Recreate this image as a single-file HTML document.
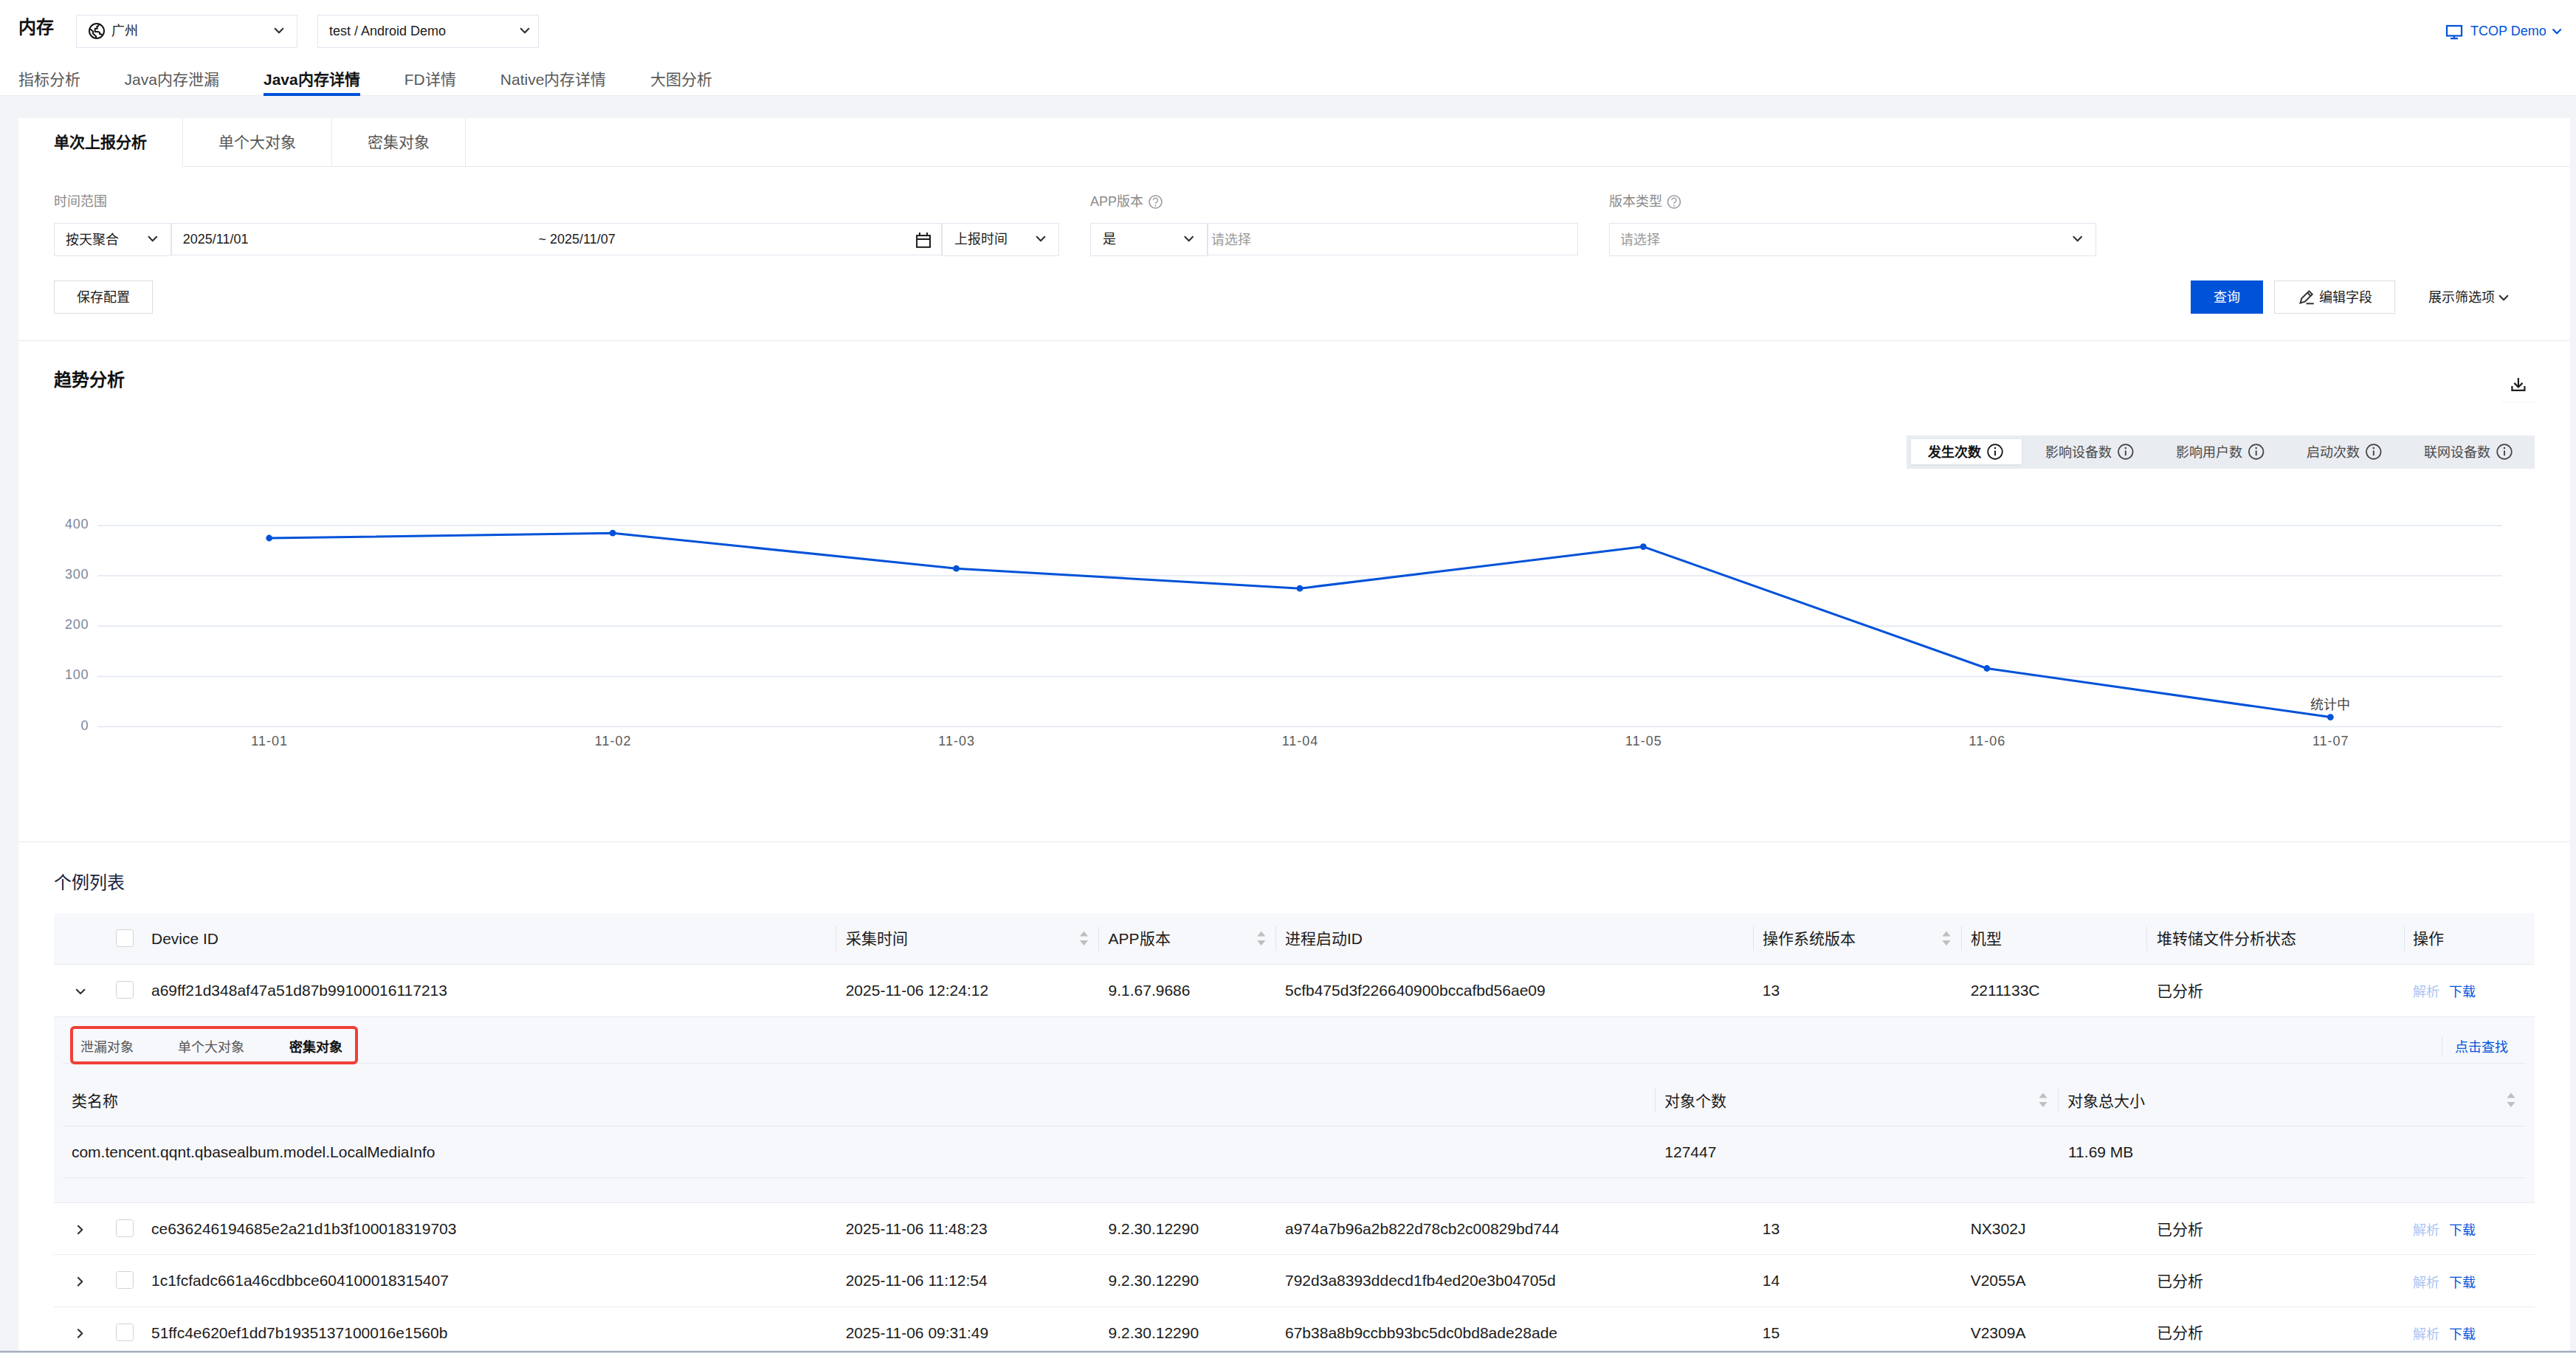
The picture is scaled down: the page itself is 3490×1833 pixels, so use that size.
<!DOCTYPE html>
<html lang="zh-CN"><head><meta charset="utf-8"><title>内存 - Java内存详情</title>
<style>
html,body{margin:0;padding:0}
body{width:3490px;height:1833px;overflow:hidden;position:relative;background:#f3f4f7;font-family:"Liberation Sans",sans-serif;}
body>div{position:absolute;}
.t{white-space:nowrap;}
svg{position:absolute;left:0;top:0;}
</style></head><body>
<div style="left:0px;top:0px;width:3490px;height:129px;background:#fff;border-bottom:1px solid #e9ebf0;"></div>
<div class="t" style="top:19px;height:36px;line-height:36px;font-size:24px;color:#111;font-weight:700;left:25px;">内存</div>
<div style="left:103px;top:20px;width:300px;height:45px;border:1px solid #e2e5ee;background:#fff;box-sizing:border-box;"></div>
<div class="t" style="top:28.5px;height:27px;line-height:27px;font-size:18px;color:#1b1b1b;left:151px;">广州</div>
<div style="left:430px;top:20px;width:300px;height:45px;border:1px solid #e2e5ee;background:#fff;box-sizing:border-box;"></div>
<div class="t" style="top:28.5px;height:27px;line-height:27px;font-size:18px;color:#1b1b1b;left:446px;">test / Android Demo</div>
<div class="t" style="top:28.5px;height:27px;line-height:27px;font-size:18px;color:#0052d9;left:3347px;">TCOP Demo</div>
<div class="t" style="top:91.6px;height:32px;line-height:32px;font-size:21px;color:#585858;left:25px;">指标分析</div>
<div class="t" style="top:91.6px;height:32px;line-height:32px;font-size:21px;color:#585858;left:168.6px;">Java内存泄漏</div>
<div class="t" style="top:91.6px;height:32px;line-height:32px;font-size:21px;color:#151515;font-weight:700;left:357px;">Java内存详情</div>
<div class="t" style="top:91.6px;height:32px;line-height:32px;font-size:21px;color:#585858;left:547.8px;">FD详情</div>
<div class="t" style="top:91.6px;height:32px;line-height:32px;font-size:21px;color:#585858;left:677.8px;">Native内存详情</div>
<div class="t" style="top:91.6px;height:32px;line-height:32px;font-size:21px;color:#585858;left:880.9px;">大图分析</div>
<div style="left:357px;top:126px;width:131px;height:3.5px;background:#0052d9;"></div>
<div style="left:25px;top:160px;width:3457px;height:1673px;background:#fff;"></div>
<div style="left:247px;top:225px;width:3235px;height:1px;background:#e7e9f0;"></div>
<div style="left:247px;top:160px;width:1px;height:65px;background:#e7e9f0;"></div>
<div style="left:449px;top:160px;width:1px;height:65px;background:#e7e9f0;"></div>
<div style="left:630px;top:160px;width:1px;height:65px;background:#e7e9f0;"></div>
<div class="t" style="top:176.5px;height:32px;line-height:32px;font-size:21px;color:#111;font-weight:700;left:-164px;width:600px;text-align:center;">单次上报分析</div>
<div class="t" style="top:176.5px;height:32px;line-height:32px;font-size:21px;color:#555;left:48.4px;width:600px;text-align:center;">单个大对象</div>
<div class="t" style="top:176.5px;height:32px;line-height:32px;font-size:21px;color:#555;left:240px;width:600px;text-align:center;">密集对象</div>
<div class="t" style="top:260.2px;height:27px;line-height:27px;font-size:18px;color:#8a8a8a;left:73px;">时间范围</div>
<div class="t" style="top:260px;height:27px;line-height:27px;font-size:18px;color:#8a8a8a;left:1477px;">APP版本</div>
<div class="t" style="top:260.2px;height:27px;line-height:27px;font-size:18px;color:#8a8a8a;left:2179.5px;">版本类型</div>
<div style="left:73px;top:302px;width:159px;height:44.5px;border:1px solid #e2e5ee;background:#fff;box-sizing:border-box;"></div>
<div class="t" style="top:311.5px;height:27px;line-height:27px;font-size:18px;color:#1b1b1b;left:88.5px;">按天聚合</div>
<div style="left:232px;top:302px;width:1044px;height:43.5px;border:1px solid #e2e5ee;background:#fff;box-sizing:border-box;"></div>
<div class="t" style="top:311px;height:27px;line-height:27px;font-size:18px;color:#1b1b1b;left:247.8px;">2025/11/01</div>
<div class="t" style="top:311px;height:27px;line-height:27px;font-size:18px;color:#1b1b1b;left:729.5px;">~ 2025/11/07</div>
<div style="left:1276px;top:302px;width:159px;height:44.5px;border:1px solid #e2e5ee;background:#fff;box-sizing:border-box;"></div>
<div class="t" style="top:311px;height:27px;line-height:27px;font-size:18px;color:#1b1b1b;left:1293px;">上报时间</div>
<div style="left:1477px;top:302px;width:159px;height:44.5px;border:1px solid #e2e5ee;background:#fff;box-sizing:border-box;"></div>
<div class="t" style="top:311px;height:27px;line-height:27px;font-size:18px;color:#1b1b1b;left:1493.7px;">是</div>
<div style="left:1636px;top:302px;width:502px;height:43.5px;border:1px solid #e2e5ee;background:#fff;box-sizing:border-box;"></div>
<div class="t" style="top:311.5px;height:27px;line-height:27px;font-size:18px;color:#9a9a9a;left:1641px;">请选择</div>
<div style="left:2179.5px;top:302px;width:660.5px;height:44.5px;border:1px solid #e2e5ee;background:#fff;box-sizing:border-box;"></div>
<div class="t" style="top:311.5px;height:27px;line-height:27px;font-size:18px;color:#9a9a9a;left:2195px;">请选择</div>
<div style="left:73px;top:380px;width:133.5px;height:44.5px;border:1px solid #dcdcdc;box-sizing:border-box;background:#fff;"></div>
<div class="t" style="top:390.3px;height:27px;line-height:27px;font-size:18px;color:#1b1b1b;left:-160.3px;width:600px;text-align:center;">保存配置</div>
<div style="left:2968px;top:380px;width:98px;height:44.5px;background:#0052d9;"></div>
<div class="t" style="top:390.3px;height:27px;line-height:27px;font-size:18px;color:#fff;left:2717px;width:600px;text-align:center;">查询</div>
<div style="left:3081px;top:380px;width:163.5px;height:44.5px;border:1px solid #dcdcdc;box-sizing:border-box;background:#fff;"></div>
<div class="t" style="top:390.3px;height:27px;line-height:27px;font-size:18px;color:#1b1b1b;left:3141.8px;">编辑字段</div>
<div class="t" style="top:390.3px;height:27px;line-height:27px;font-size:18px;color:#1b1b1b;left:3290px;">展示筛选项</div>
<div style="left:25px;top:461px;width:3457px;height:1px;background:#e7e9f0;"></div>
<div class="t" style="top:497px;height:36px;line-height:36px;font-size:24px;color:#111;font-weight:700;left:73px;">趋势分析</div>
<div style="left:3389px;top:543px;width:45px;height:3px;background:#fbfbfb;"></div>
<div style="left:2583px;top:590px;width:851px;height:45px;background:#e9ecf1;"></div>
<div style="left:2589px;top:595px;width:150px;height:34px;background:#fff;box-shadow:0 1px 3px rgba(0,0,0,.08);"></div>
<div class="t" style="top:599.6px;height:27px;line-height:27px;font-size:18px;color:#111;font-weight:700;left:2612.4px;">发生次数</div>
<div class="t" style="top:599.6px;height:27px;line-height:27px;font-size:18px;color:#4a4a4a;left:2771px;">影响设备数</div>
<div class="t" style="top:599.6px;height:27px;line-height:27px;font-size:18px;color:#4a4a4a;left:2948px;">影响用户数</div>
<div class="t" style="top:599.6px;height:27px;line-height:27px;font-size:18px;color:#4a4a4a;left:3124.8px;">启动次数</div>
<div class="t" style="top:599.6px;height:27px;line-height:27px;font-size:18px;color:#4a4a4a;left:3284.4px;">联网设备数</div>
<div class="t" style="top:969.5px;height:27px;line-height:27px;font-size:18px;color:#7c8799;left:20.2px;width:100px;text-align:right;letter-spacing:.7px;">0</div>
<div class="t" style="top:901.375px;height:27px;line-height:27px;font-size:18px;color:#7c8799;left:20.2px;width:100px;text-align:right;letter-spacing:.7px;">100</div>
<div class="t" style="top:833.25px;height:27px;line-height:27px;font-size:18px;color:#7c8799;left:20.2px;width:100px;text-align:right;letter-spacing:.7px;">200</div>
<div class="t" style="top:765.125px;height:27px;line-height:27px;font-size:18px;color:#7c8799;left:20.2px;width:100px;text-align:right;letter-spacing:.7px;">300</div>
<div class="t" style="top:697px;height:27px;line-height:27px;font-size:18px;color:#7c8799;left:20.2px;width:100px;text-align:right;letter-spacing:.7px;">400</div>
<div class="t" style="top:990.8px;height:27px;line-height:27px;font-size:18px;color:#5a5a5a;left:305.214px;width:120px;text-align:center;letter-spacing:1px;">11-01</div>
<div class="t" style="top:990.8px;height:27px;line-height:27px;font-size:18px;color:#5a5a5a;left:770.643px;width:120px;text-align:center;letter-spacing:1px;">11-02</div>
<div class="t" style="top:990.8px;height:27px;line-height:27px;font-size:18px;color:#5a5a5a;left:1236.07px;width:120px;text-align:center;letter-spacing:1px;">11-03</div>
<div class="t" style="top:990.8px;height:27px;line-height:27px;font-size:18px;color:#5a5a5a;left:1701.5px;width:120px;text-align:center;letter-spacing:1px;">11-04</div>
<div class="t" style="top:990.8px;height:27px;line-height:27px;font-size:18px;color:#5a5a5a;left:2166.93px;width:120px;text-align:center;letter-spacing:1px;">11-05</div>
<div class="t" style="top:990.8px;height:27px;line-height:27px;font-size:18px;color:#5a5a5a;left:2632.36px;width:120px;text-align:center;letter-spacing:1px;">11-06</div>
<div class="t" style="top:990.8px;height:27px;line-height:27px;font-size:18px;color:#5a5a5a;left:3097.79px;width:120px;text-align:center;letter-spacing:1px;">11-07</div>
<div class="t" style="top:942.3px;height:27px;line-height:27px;font-size:18px;color:#444;left:3097.29px;width:120px;text-align:center;">统计中</div>
<div style="left:25px;top:1140px;width:3457px;height:1px;background:#e7e9f0;"></div>
<div class="t" style="top:1178.2px;height:36px;line-height:36px;font-size:24px;color:#16233d;left:73px;">个例列表</div>
<div style="left:73px;top:1237px;width:3361px;height:69px;background:#f7f8fb;border-bottom:1px solid #e7e9f0;border-radius:4px 4px 0 0;"></div>
<div style="left:157px;top:1259px;width:22px;height:22px;border:1px solid #d3d3d5;border-radius:3.5px;background:#fff;"></div>
<div class="t" style="top:1256.4px;height:32px;line-height:32px;font-size:21px;color:#1b1b1b;left:205px;">Device ID</div>
<div class="t" style="top:1256.4px;height:32px;line-height:32px;font-size:21px;color:#1b1b1b;left:1145.7px;">采集时间</div>
<div class="t" style="top:1256.4px;height:32px;line-height:32px;font-size:21px;color:#1b1b1b;left:1501.5px;">APP版本</div>
<div class="t" style="top:1256.4px;height:32px;line-height:32px;font-size:21px;color:#1b1b1b;left:1741px;">进程启动ID</div>
<div class="t" style="top:1256.4px;height:32px;line-height:32px;font-size:21px;color:#1b1b1b;left:2387.8px;">操作系统版本</div>
<div class="t" style="top:1256.4px;height:32px;line-height:32px;font-size:21px;color:#1b1b1b;left:2669.7px;">机型</div>
<div class="t" style="top:1256.4px;height:32px;line-height:32px;font-size:21px;color:#1b1b1b;left:2921.7px;">堆转储文件分析状态</div>
<div class="t" style="top:1256.4px;height:32px;line-height:32px;font-size:21px;color:#1b1b1b;left:3269px;">操作</div>
<div style="left:1132px;top:1255px;width:1px;height:33px;background:#e1e4ea;"></div>
<div style="left:1488px;top:1255px;width:1px;height:33px;background:#e1e4ea;"></div>
<div style="left:1728px;top:1255px;width:1px;height:33px;background:#e1e4ea;"></div>
<div style="left:2375px;top:1255px;width:1px;height:33px;background:#e1e4ea;"></div>
<div style="left:2657px;top:1255px;width:1px;height:33px;background:#e1e4ea;"></div>
<div style="left:2908px;top:1255px;width:1px;height:33px;background:#e1e4ea;"></div>
<div style="left:3257px;top:1255px;width:1px;height:33px;background:#e1e4ea;"></div>
<div style="left:157px;top:1329px;width:22px;height:22px;border:1px solid #d3d3d5;border-radius:3.5px;background:#fff;"></div>
<div class="t" style="top:1326px;height:32px;line-height:32px;font-size:21px;color:#1b1b1b;left:205px;">a69ff21d348af47a51d87b99100016117213</div>
<div class="t" style="top:1326px;height:32px;line-height:32px;font-size:21px;color:#1b1b1b;left:1145.7px;">2025-11-06 12:24:12</div>
<div class="t" style="top:1326px;height:32px;line-height:32px;font-size:21px;color:#1b1b1b;left:1501.5px;">9.1.67.9686</div>
<div class="t" style="top:1326px;height:32px;line-height:32px;font-size:21px;color:#1b1b1b;left:1741px;">5cfb475d3f226640900bccafbd56ae09</div>
<div class="t" style="top:1326px;height:32px;line-height:32px;font-size:21px;color:#1b1b1b;left:2387.8px;">13</div>
<div class="t" style="top:1326px;height:32px;line-height:32px;font-size:21px;color:#1b1b1b;left:2669.7px;">2211133C</div>
<div class="t" style="top:1326.6px;height:32px;line-height:32px;font-size:21px;color:#1b1b1b;left:2921.7px;">已分析</div>
<div class="t" style="top:1331.4px;height:27px;line-height:27px;font-size:18px;color:#a9c4f3;left:3269px;">解析</div>
<div class="t" style="top:1331.4px;height:27px;line-height:27px;font-size:18px;color:#0052d9;left:3317.6px;">下载</div>
<div style="left:157px;top:1652px;width:22px;height:22px;border:1px solid #d3d3d5;border-radius:3.5px;background:#fff;"></div>
<div class="t" style="top:1649px;height:32px;line-height:32px;font-size:21px;color:#1b1b1b;left:205px;">ce636246194685e2a21d1b3f100018319703</div>
<div class="t" style="top:1649px;height:32px;line-height:32px;font-size:21px;color:#1b1b1b;left:1145.7px;">2025-11-06 11:48:23</div>
<div class="t" style="top:1649px;height:32px;line-height:32px;font-size:21px;color:#1b1b1b;left:1501.5px;">9.2.30.12290</div>
<div class="t" style="top:1649px;height:32px;line-height:32px;font-size:21px;color:#1b1b1b;left:1741px;">a974a7b96a2b822d78cb2c00829bd744</div>
<div class="t" style="top:1649px;height:32px;line-height:32px;font-size:21px;color:#1b1b1b;left:2387.8px;">13</div>
<div class="t" style="top:1649px;height:32px;line-height:32px;font-size:21px;color:#1b1b1b;left:2669.7px;">NX302J</div>
<div class="t" style="top:1649.6px;height:32px;line-height:32px;font-size:21px;color:#1b1b1b;left:2921.7px;">已分析</div>
<div class="t" style="top:1654.4px;height:27px;line-height:27px;font-size:18px;color:#a9c4f3;left:3269px;">解析</div>
<div class="t" style="top:1654.4px;height:27px;line-height:27px;font-size:18px;color:#0052d9;left:3317.6px;">下载</div>
<div style="left:157px;top:1722.3px;width:22px;height:22px;border:1px solid #d3d3d5;border-radius:3.5px;background:#fff;"></div>
<div class="t" style="top:1719.3px;height:32px;line-height:32px;font-size:21px;color:#1b1b1b;left:205px;">1c1fcfadc661a46cdbbce604100018315407</div>
<div class="t" style="top:1719.3px;height:32px;line-height:32px;font-size:21px;color:#1b1b1b;left:1145.7px;">2025-11-06 11:12:54</div>
<div class="t" style="top:1719.3px;height:32px;line-height:32px;font-size:21px;color:#1b1b1b;left:1501.5px;">9.2.30.12290</div>
<div class="t" style="top:1719.3px;height:32px;line-height:32px;font-size:21px;color:#1b1b1b;left:1741px;">792d3a8393ddecd1fb4ed20e3b04705d</div>
<div class="t" style="top:1719.3px;height:32px;line-height:32px;font-size:21px;color:#1b1b1b;left:2387.8px;">14</div>
<div class="t" style="top:1719.3px;height:32px;line-height:32px;font-size:21px;color:#1b1b1b;left:2669.7px;">V2055A</div>
<div class="t" style="top:1719.9px;height:32px;line-height:32px;font-size:21px;color:#1b1b1b;left:2921.7px;">已分析</div>
<div class="t" style="top:1724.7px;height:27px;line-height:27px;font-size:18px;color:#a9c4f3;left:3269px;">解析</div>
<div class="t" style="top:1724.7px;height:27px;line-height:27px;font-size:18px;color:#0052d9;left:3317.6px;">下载</div>
<div style="left:157px;top:1792.6px;width:22px;height:22px;border:1px solid #d3d3d5;border-radius:3.5px;background:#fff;"></div>
<div class="t" style="top:1789.6px;height:32px;line-height:32px;font-size:21px;color:#1b1b1b;left:205px;">51ffc4e620ef1dd7b1935137100016e1560b</div>
<div class="t" style="top:1789.6px;height:32px;line-height:32px;font-size:21px;color:#1b1b1b;left:1145.7px;">2025-11-06 09:31:49</div>
<div class="t" style="top:1789.6px;height:32px;line-height:32px;font-size:21px;color:#1b1b1b;left:1501.5px;">9.2.30.12290</div>
<div class="t" style="top:1789.6px;height:32px;line-height:32px;font-size:21px;color:#1b1b1b;left:1741px;">67b38a8b9ccbb93bc5dc0bd8ade28ade</div>
<div class="t" style="top:1789.6px;height:32px;line-height:32px;font-size:21px;color:#1b1b1b;left:2387.8px;">15</div>
<div class="t" style="top:1789.6px;height:32px;line-height:32px;font-size:21px;color:#1b1b1b;left:2669.7px;">V2309A</div>
<div class="t" style="top:1790.2px;height:32px;line-height:32px;font-size:21px;color:#1b1b1b;left:2921.7px;">已分析</div>
<div class="t" style="top:1795px;height:27px;line-height:27px;font-size:18px;color:#a9c4f3;left:3269px;">解析</div>
<div class="t" style="top:1795px;height:27px;line-height:27px;font-size:18px;color:#0052d9;left:3317.6px;">下载</div>
<div style="left:73px;top:1699px;width:3361px;height:1px;background:#ededee;"></div>
<div style="left:73px;top:1770px;width:3361px;height:1px;background:#ededee;"></div>
<div style="left:73px;top:1377px;width:3361px;height:252.5px;background:#f7f8fb;border-top:1px solid #e7e9f0;border-bottom:1px solid #e7e9f0;box-sizing:border-box;"></div>
<div class="t" style="top:1405.9px;height:27px;line-height:27px;font-size:18px;color:#555;left:109.3px;">泄漏对象</div>
<div class="t" style="top:1405.9px;height:27px;line-height:27px;font-size:18px;color:#555;left:241.3px;">单个大对象</div>
<div class="t" style="top:1405.9px;height:27px;line-height:27px;font-size:18px;color:#111;font-weight:700;left:391.5px;">密集对象</div>
<div style="left:85px;top:1440px;width:3337px;height:1px;background:#e7e9f0;"></div>
<div style="left:95px;top:1390px;width:390px;height:51.7px;border:4px solid #ee4037;border-radius:6px;box-sizing:border-box;"></div>
<div style="left:3308px;top:1405px;width:1px;height:27px;background:#e1e4ea;"></div>
<div class="t" style="top:1405.9px;height:27px;line-height:27px;font-size:18px;color:#0052d9;left:3326px;">点击查找</div>
<div class="t" style="top:1475.6px;height:32px;line-height:32px;font-size:21px;color:#1b1b1b;left:96.9px;">类名称</div>
<div class="t" style="top:1475.6px;height:32px;line-height:32px;font-size:21px;color:#1b1b1b;left:2255.3px;">对象个数</div>
<div class="t" style="top:1475.6px;height:32px;line-height:32px;font-size:21px;color:#1b1b1b;left:2801px;">对象总大小</div>
<div style="left:2242px;top:1473px;width:1px;height:34px;background:#e1e4ea;"></div>
<div style="left:2788px;top:1473px;width:1px;height:34px;background:#e1e4ea;"></div>
<div style="left:85px;top:1525px;width:3337px;height:1px;background:#e7e9f0;"></div>
<div class="t" style="top:1545px;height:32px;line-height:32px;font-size:21px;color:#1b1b1b;left:96.9px;">com.tencent.qqnt.qbasealbum.model.LocalMediaInfo</div>
<div class="t" style="top:1545px;height:32px;line-height:32px;font-size:21px;color:#1b1b1b;left:2255.3px;">127447</div>
<div class="t" style="top:1545px;height:32px;line-height:32px;font-size:21px;color:#1b1b1b;left:2802px;">11.69 MB</div>
<div style="left:85px;top:1595px;width:3337px;height:1px;background:#e7e9f0;"></div>
<div style="left:0px;top:1830px;width:3490px;height:1px;background:#9aa3b4;"></div>
<div style="left:0px;top:1831px;width:3490px;height:1px;background:#b4bccd;"></div>
<div style="left:0px;top:1832px;width:3490px;height:1px;background:#c9d0e0;"></div>
<svg width="3490" height="1833" viewBox="0 0 3490 1833" stroke-linecap="butt">
<g fill="none" stroke="#161616" stroke-width="2" stroke-linejoin="round"><circle cx="131" cy="42" r="10"/><path d="M134.2 32.4L133 35.5L131.3 35.7L131.8 38.8H128.7V43H133.2L135.1 44.2L134.9 46.1L136.8 46.3L138.7 47.3"/><path d="M122.1 39.2L126.1 42.6L125.9 45.4L130.1 49.2V51.9"/></g>
<path d="M372.7 38.85L378 44.15L383.3 38.85" fill="none" stroke="#303030" stroke-width="2.1" stroke-linecap="round" stroke-linejoin="round"/>
<path d="M705.7 38.85L711 44.15L716.3 38.85" fill="none" stroke="#303030" stroke-width="2.1" stroke-linecap="round" stroke-linejoin="round"/>
<g fill="none" stroke="#0052d9" stroke-width="2.2"><rect x="3315" y="35" width="20" height="13.5"/><path d="M3325 48.5V52M3320 52.2H3330"/></g>
<path d="M3459.1 40L3464.1 45.2L3469.1 40" fill="none" stroke="#0052d9" stroke-width="2.1" stroke-linecap="round" stroke-linejoin="round"/>
<circle cx="1565.5" cy="273.5" r="8.5" fill="none" stroke="#9a9aa2" stroke-width="1.6"/>
<path d="M1562.5 271.3a3 3 0 1 1 4.5 2.6c-1.1 .7-1.5 1.2-1.5 2.4" fill="none" stroke="#9a9aa2" stroke-width="1.4"/>
<circle cx="1565.5" cy="278.7" r="1" fill="#9a9aa2"/>
<circle cx="2268" cy="273.5" r="8.5" fill="none" stroke="#9a9aa2" stroke-width="1.6"/>
<path d="M2265 271.3a3 3 0 1 1 4.5 2.6c-1.1 .7-1.5 1.2-1.5 2.4" fill="none" stroke="#9a9aa2" stroke-width="1.4"/>
<circle cx="2268" cy="278.7" r="1" fill="#9a9aa2"/>
<path d="M201.5 320.85L206.8 326.15L212.1 320.85" fill="none" stroke="#303030" stroke-width="2.1" stroke-linecap="round" stroke-linejoin="round"/>
<g fill="none" stroke="#1c1c1c" stroke-width="2"><rect x="1242.1" y="319.1" width="17.9" height="15.7"/><path d="M1242 324H1260M1246 315V319M1256 315V319"/></g>
<path d="M1404.7 320.85L1410 326.15L1415.3 320.85" fill="none" stroke="#303030" stroke-width="2.1" stroke-linecap="round" stroke-linejoin="round"/>
<path d="M1605.4 320.85L1610.7 326.15L1616 320.85" fill="none" stroke="#303030" stroke-width="2.1" stroke-linecap="round" stroke-linejoin="round"/>
<path d="M2809.4 320.85L2814.7 326.15L2820 320.85" fill="none" stroke="#303030" stroke-width="2.1" stroke-linecap="round" stroke-linejoin="round"/>
<g fill="none" stroke="#333" stroke-width="2"><path d="M3116.5 410.5l1.8-6.2 10-10 4.4 4.4-10 10z M3126 396.5l4.4 4.4"/><path d="M3124.5 411.3H3134.8"/></g>
<path d="M3386.7 400.85L3392 406.15L3397.3 400.85" fill="none" stroke="#303030" stroke-width="2.1" stroke-linecap="round" stroke-linejoin="round"/>
<g fill="none" stroke="#1e1e1e" stroke-width="2.2"><path d="M3411.9 512V524.6M3406.3 518.9l5.6 5.6 5.6-5.6M3403.4 523V528.9H3420.4V523"/></g>
<circle cx="2703" cy="612" r="9.8" fill="none" stroke="#111" stroke-width="1.7"/>
<path d="M2703 610.4V617.2" stroke="#111" stroke-width="1.9"/>
<circle cx="2703" cy="607.1" r="1.25" fill="#111"/>
<circle cx="2879.8" cy="612" r="9.8" fill="none" stroke="#444" stroke-width="1.7"/>
<path d="M2879.8 610.4V617.2" stroke="#444" stroke-width="1.9"/>
<circle cx="2879.8" cy="607.1" r="1.25" fill="#444"/>
<circle cx="3056.7" cy="612" r="9.8" fill="none" stroke="#444" stroke-width="1.7"/>
<path d="M3056.7 610.4V617.2" stroke="#444" stroke-width="1.9"/>
<circle cx="3056.7" cy="607.1" r="1.25" fill="#444"/>
<circle cx="3215.8" cy="612" r="9.8" fill="none" stroke="#444" stroke-width="1.7"/>
<path d="M3215.8 610.4V617.2" stroke="#444" stroke-width="1.9"/>
<circle cx="3215.8" cy="607.1" r="1.25" fill="#444"/>
<circle cx="3393" cy="612" r="9.8" fill="none" stroke="#444" stroke-width="1.7"/>
<path d="M3393 610.4V617.2" stroke="#444" stroke-width="1.9"/>
<circle cx="3393" cy="607.1" r="1.25" fill="#444"/>
<path d="M132 984.5H3390" stroke="#e0e6f1" stroke-width="1.5"/>
<path d="M132 916.4H3390" stroke="#e0e6f1" stroke-width="1.5"/>
<path d="M132 848.2H3390" stroke="#e0e6f1" stroke-width="1.5"/>
<path d="M132 780.1H3390" stroke="#e0e6f1" stroke-width="1.5"/>
<path d="M132 712.0H3390" stroke="#e0e6f1" stroke-width="1.5"/>
<polyline fill="none" stroke="#0052d9" stroke-width="3" stroke-linejoin="round" points="364.7,729.0 830.1,722.2 1295.6,770.2 1761.0,797.2 2226.4,740.6 2691.9,905.5 3157.3,971.6"/>
<circle cx="364.7" cy="729.0" r="4.4" fill="#0052d9"/>
<circle cx="830.1" cy="722.2" r="4.4" fill="#0052d9"/>
<circle cx="1295.6" cy="770.2" r="4.4" fill="#0052d9"/>
<circle cx="1761.0" cy="797.2" r="4.4" fill="#0052d9"/>
<circle cx="2226.4" cy="740.6" r="4.4" fill="#0052d9"/>
<circle cx="2691.9" cy="905.5" r="4.4" fill="#0052d9"/>
<circle cx="3157.3" cy="971.6" r="4.4" fill="#0052d9"/>
<path d="M1462.9 1268.5L1468.5 1261.5L1474.1 1268.5Z" fill="#bfbfc1"/>
<path d="M1462.9 1274L1468.5 1281L1474.1 1274Z" fill="#bfbfc1"/>
<path d="M1703.2 1268.5L1708.8 1261.5L1714.4 1268.5Z" fill="#bfbfc1"/>
<path d="M1703.2 1274L1708.8 1281L1714.4 1274Z" fill="#bfbfc1"/>
<path d="M2631.4 1268.5L2637 1261.5L2642.6 1268.5Z" fill="#bfbfc1"/>
<path d="M2631.4 1274L2637 1281L2642.6 1274Z" fill="#bfbfc1"/>
<path d="M103.8 1340.75L109.1 1346.05L114.4 1340.75" fill="none" stroke="#303030" stroke-width="2.1" stroke-linecap="round" stroke-linejoin="round"/>
<path d="M105.9 1660.75L111.3 1666L105.9 1671.25" fill="none" stroke="#303030" stroke-width="2.1" stroke-linecap="round" stroke-linejoin="round"/>
<path d="M105.9 1731.05L111.3 1736.3L105.9 1741.55" fill="none" stroke="#303030" stroke-width="2.1" stroke-linecap="round" stroke-linejoin="round"/>
<path d="M105.9 1801.35L111.3 1806.6L105.9 1811.85" fill="none" stroke="#303030" stroke-width="2.1" stroke-linecap="round" stroke-linejoin="round"/>
<path d="M2762.4 1487.5L2768 1480.5L2773.6 1487.5Z" fill="#bfbfc1"/>
<path d="M2762.4 1493L2768 1500L2773.6 1493Z" fill="#bfbfc1"/>
<path d="M3396.4 1487.5L3402 1480.5L3407.6 1487.5Z" fill="#bfbfc1"/>
<path d="M3396.4 1493L3402 1500L3407.6 1493Z" fill="#bfbfc1"/>
</svg>
</body></html>
